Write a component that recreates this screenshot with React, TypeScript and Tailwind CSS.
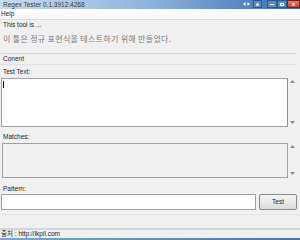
import React from "react";

const small = "text-[6.5px] leading-[8px] text-[#1e1e1e]";

function Arrows({ top, bottom }: { top: number; bottom: number }) {
  return (
    <div className="w-[9px] flex flex-col items-center justify-between" style={{ paddingTop: top, paddingBottom: bottom }}>
      <svg width="5" height="3" viewBox="0 0 5 3"><path d="M0 3 L2.5 0 L5 3Z" fill="#8a8a8a" /></svg>
      <svg width="5" height="3" viewBox="0 0 5 3"><path d="M0 0 L2.5 3 L5 0Z" fill="#8a8a8a" /></svg>
    </div>
  );
}

export default function App() {
  return (
    <div
      className="w-[300px] h-[240px] bg-[#f0f0f0] flex flex-col overflow-hidden"
      style={{ fontFamily: '"Liberation Sans", Arial, "Noto Sans CJK KR", sans-serif' }}
    >
      {/* title bar */}
      <div className="h-[9px] flex items-center bg-gradient-to-r from-[#c9dcef] via-[#8fb3db] to-[#2f6db2]">
        <span className="pl-[3px] text-[6.5px] leading-[9px] text-[#3a3a3a]">Regex Tester 0.1.3912.4268</span>
        <div className="flex-1" />
        <div className="flex h-[9px] items-start">
          <div className="w-[12px] h-[8px] flex items-center justify-center">
            <svg width="7" height="4" viewBox="0 0 7 4"><path d="M0 2 L2.5 0 L2.5 4Z M7 2 L4.5 0 L4.5 4Z" fill="#ffffff" /></svg>
          </div>
          <div className="w-[9px] h-[8px] mx-[1px] bg-[#5d8cc2] border border-[#2a5a90] flex items-center justify-center">
            <div className="w-[3px] h-[3px] rounded-full bg-[#d8e6f5]" />
          </div>
          <div className="w-[4px]" />
          <div className="w-[10px] h-[8px] bg-[#5d8cc2] border border-[#2a5a90] flex items-end justify-center pb-[2px]">
            <div className="w-[4px] h-[1px] bg-white" />
          </div>
          <div className="w-[10px] h-[8px] bg-[#5d8cc2] border border-[#2a5a90] flex items-center justify-center">
            <div className="w-[4px] h-[3px] border border-white" />
          </div>
          <div className="w-[13px] h-[8px] bg-gradient-to-b from-[#e0806a] to-[#c5402a] border border-[#7a2418] flex items-center justify-center">
            <span className="text-[6px] leading-[6px] text-white font-bold">x</span>
          </div>
        </div>
      </div>

      {/* menu bar */}
      <div className="h-[11px] bg-gradient-to-b from-[#ffffff] to-[#f4f6f9] border-b border-[#dcdcdc] flex items-center">
        <span className={`${small} pl-[1px]`}>Help</span>
      </div>

      <div className="flex flex-col pl-[1px] pr-[3px]">
        <div className={`${small} pl-[2px] mt-[1px]`}>This tool is ...</div>
        <div
          className="pl-[2px] mt-[4px] h-[12px] text-[8px] leading-[12px] text-[#7d7d7d] tracking-[0.3px]"
          style={{ fontFamily: '"Noto Sans CJK KR", sans-serif' }}
        >
          이 툴은 정규 표현식을 테스트하기 위해 만들었다.
        </div>
        <div className="mt-[8px] h-[1px] bg-[#d8d8d8]" />
        <div className={`${small} pl-[2px] mt-[1px]`}>Conent</div>
        <div className="mt-[1px] h-[1px] bg-[#e2e2e2]" />
        <div className={`${small} pl-[2px] mt-[3px]`}>Test Text:</div>
        <div className="mt-[2px] flex">
          <div className="w-[290px] h-[49px] bg-white border border-[#a0a0a0] border-r-[#8f8f8f] relative">
            <div className="absolute left-[1px] top-[2px] w-[1px] h-[7px] bg-black" />
          </div>
          <Arrows top={2} bottom={3} />
        </div>
        <div className={`${small} pl-[2px] mt-[6px]`}>Matches:</div>
        <div className="mt-[2px] flex pl-[1px]">
          <div className="w-[289px] h-[35px] bg-[#f0f0f0] border border-[#a0a0a0]" />
          <Arrows top={2} bottom={3} />
        </div>
        <div className={`${small} pl-[2px] mt-[7px]`}>Pattern:</div>
        <div className="mt-[1px] flex items-start">
          <div className="w-[255px] h-[16px] bg-white border border-[#a0a0a0]" />
          <button className="ml-[3px] w-[38px] h-[16px] rounded-[2px] border border-[#8a8a8a] bg-gradient-to-b from-[#f5f5f5] to-[#dcdcdc] flex items-center justify-center">
            <span className={small}>Test</span>
          </button>
        </div>
      </div>
      <div className="mt-[4px] h-[1px] bg-[#e4e4e4]" />
      <div className="flex-1" />
      <div className="h-[2px] bg-[#d6d6d6]" />
      <div className="h-[8px] flex items-center bg-[#f0f0f0]">
        <span className={`${small} pl-[1px]`} style={{ fontFamily: '"Liberation Sans", "Noto Sans CJK KR", sans-serif' }}>
          출처 : http://ikpil.com
        </span>
      </div>
      <div className="h-[2px] bg-gradient-to-r from-[#7ea6d4] to-[#3f78b8]" />
    </div>
  );
}
